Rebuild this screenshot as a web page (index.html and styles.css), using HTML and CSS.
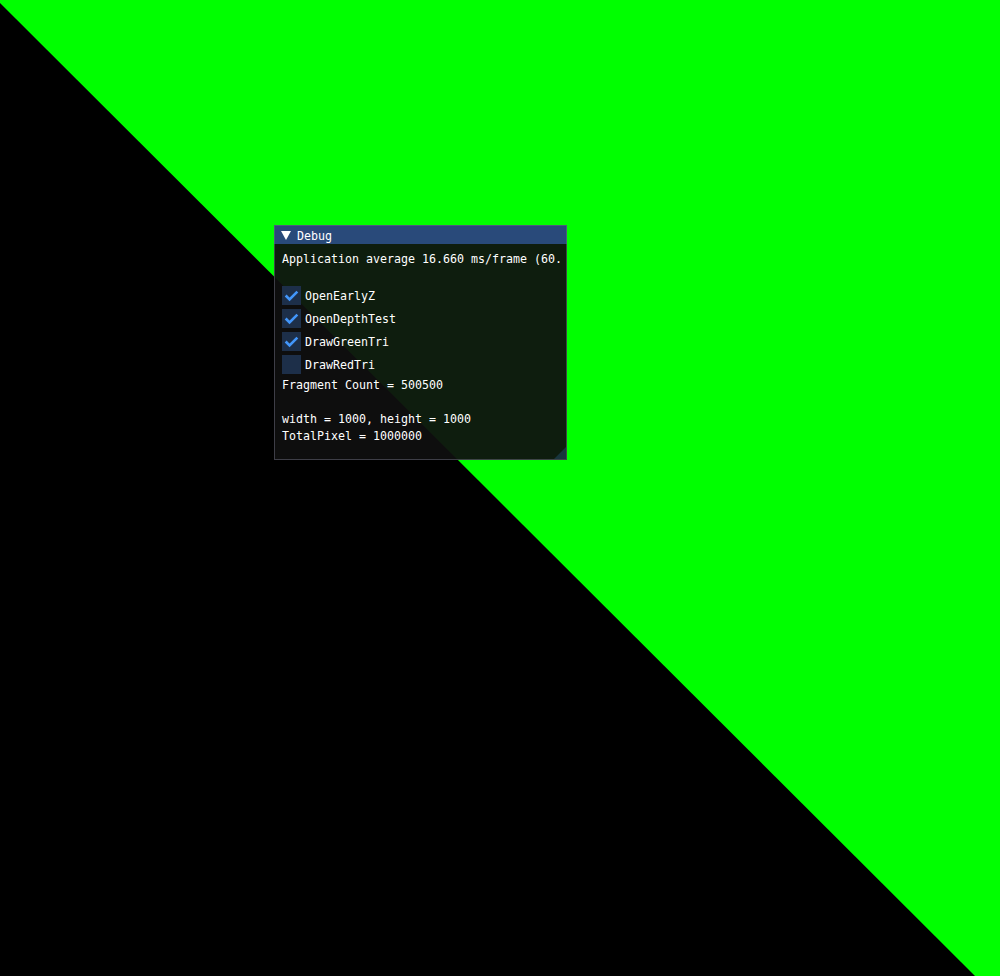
FILE: index.html
```html
<!DOCTYPE html>
<html>
<head>
<meta charset="utf-8">
<link rel="stylesheet" href="styles.css">
</head>
<body>
<svg class="scene" width="1000" height="976" viewBox="0 0 1000 976">
  <polygon points="0,0 1000,0 1000,976 975,976 0,3" fill="#00ff00"/>
</svg>
<div class="window">
  <div class="titlebar">
    <span class="arrow"></span>
    <span class="title">Debug</span>
  </div>
  <div class="content">
    <div class="clip">
      <div class="line">Application average 16.660 ms/frame (60.0 FPS)</div>
      <div class="line"></div>
      <div class="check"><span class="box"><svg width="19" height="19" viewBox="0 0 19 19"><polyline points="3.65,9.5 7.55,13.4 15.35,5.6" fill="none" stroke="#4296fa" stroke-width="2.6"/></svg></span><span class="label">OpenEarlyZ</span></div>
      <div class="check"><span class="box"><svg width="19" height="19" viewBox="0 0 19 19"><polyline points="3.65,9.5 7.55,13.4 15.35,5.6" fill="none" stroke="#4296fa" stroke-width="2.6"/></svg></span><span class="label">OpenDepthTest</span></div>
      <div class="check"><span class="box"><svg width="19" height="19" viewBox="0 0 19 19"><polyline points="3.65,9.5 7.55,13.4 15.35,5.6" fill="none" stroke="#4296fa" stroke-width="2.6"/></svg></span><span class="label">DrawGreenTri</span></div>
      <div class="check"><span class="box"></span><span class="label">DrawRedTri</span></div>
      <div class="line">Fragment Count = 500500</div>
      <div class="line"></div>
      <div class="line">width = 1000, height = 1000</div>
      <div class="line">TotalPixel = 1000000</div>
    </div>
  </div>
  <div class="grip"></div>
</div>
</body>
</html>
```
FILE: styles.css
```css
html, body {
  margin: 0;
  padding: 0;
}
body {
  width: 1000px;
  height: 976px;
  background: #000000;
  overflow: hidden;
  position: relative;
  font-family: "DejaVu Sans Mono", "Liberation Mono", monospace;
  font-size: 11.63px;
  color: #ffffff;
}
.scene {
  position: absolute;
  left: 0;
  top: 0;
  display: block;
}
.window {
  position: absolute;
  left: 274px;
  top: 225px;
  width: 293px;
  height: 235px;
  box-sizing: border-box;
  border: 1px solid rgba(110, 110, 128, 0.5);
  background: rgba(15, 15, 15, 0.94);
  display: flex;
  flex-direction: column;
}
.titlebar {
  height: 19px;
  margin: -1px -1px 0 -1px;
  background: #294a7a;
  display: flex;
  align-items: center;
  padding-left: 6px;
  box-sizing: border-box;
  border: 1px solid rgba(110, 110, 128, 0.5);
  border-bottom: none;
}
.arrow {
  width: 0;
  height: 0;
  border-left: 5px solid transparent;
  border-right: 5px solid transparent;
  border-top: 9px solid #ffffff;
  margin-right: 6px;
  margin-top: 1px;
}
.title {
  height: 13px;
  line-height: 15px;
}
.content {
  flex: 1;
  padding: 8px 4px 0 4px;
}
.clip {
  overflow: hidden;
  padding-left: 3px;
  display: flex;
  flex-direction: column;
  gap: 4px;
}
.line {
  height: 13px;
  line-height: 15px;
  white-space: nowrap;
}
.check {
  display: flex;
  align-items: center;
  height: 19px;
}
.box {
  width: 19px;
  height: 19px;
  background: #1d2f49;
  display: block;
}
.box svg {
  display: block;
}
.label {
  margin-left: 4px;
  height: 13px;
  line-height: 15px;
  white-space: nowrap;
}
.grip {
  position: absolute;
  right: 0;
  bottom: 0;
  width: 12px;
  height: 12px;
  background: rgba(66, 150, 250, 0.2);
  clip-path: polygon(100% 0, 100% 100%, 0 100%);
}
```
